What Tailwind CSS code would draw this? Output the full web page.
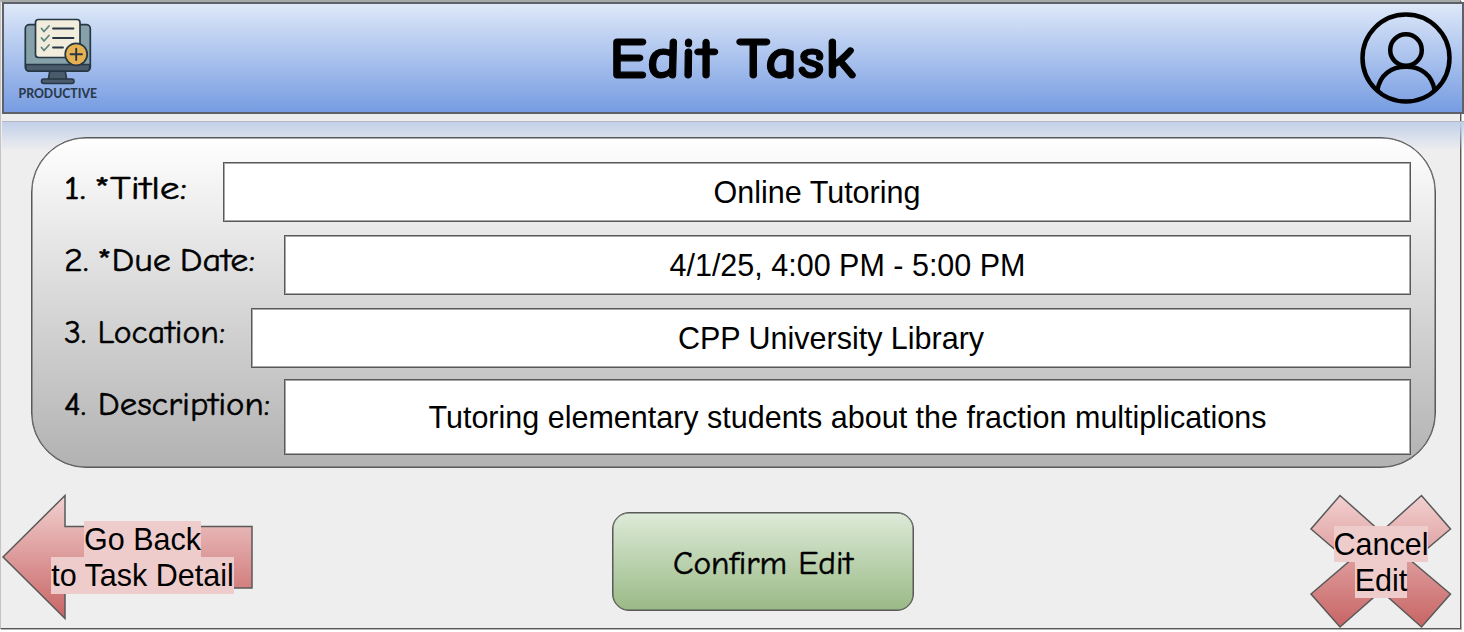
<!DOCTYPE html>
<html lang="en">
<head>
<meta charset="utf-8">
<title>Edit Task</title>
<script src="https://cdn.jsdelivr.net/npm/@tailwindcss/browser@4"></script>
</head>
<body class="w-[1464px] h-[632px] overflow-hidden bg-white text-black font-['Liberation_Sans',Arial,sans-serif]">
<div class="relative w-[1464px] h-[632px] flex flex-col">
  <!-- page frame -->
  <div class="absolute left-0 top-0 w-[1461px] h-[629px] bg-[#eeeeee] border-l border-l-[#c4c4c4] border-t-2 border-t-[#a5aaa8] border-r border-r-[#595959] border-b border-b-[#595959] shadow-[1px_1px_0_#b5b5b5]"></div>

  <header class="relative ml-[2px] mt-[2px] h-[112px] w-[1462px] shrink-0 border-2 border-[#5e6268] bg-linear-to-b from-[#dee8f8] to-[#779ce1] flex items-center justify-between pl-[12px] pr-[10px]">
    <svg class="w-[86px] h-[92px] overflow-visible" viewBox="16 12 86 92" fill="none" stroke-linecap="round" stroke-linejoin="round">
      <path d="M50 70h15l2 11H48z" fill="#4c5b6b" stroke="#263745" stroke-width="1.6"/>
      <rect x="41.500" y="79" width="32.500" height="4.600" rx="2" fill="#4c5b6b" stroke="#263745" stroke-width="1.500"/>
      <rect x="25.300" y="24.700" width="65" height="46.500" rx="4" fill="#86a1a9" stroke="#263745" stroke-width="1.700"/>
      <path d="M26 64.500h63.500v3q0 3.500-3.500 3.500H29.500q-3.500 0-3.500-3.500z" fill="#4c5b6b" stroke="#263745" stroke-width="1.300"/>
      <rect x="35.500" y="19.500" width="44.500" height="38" rx="3" fill="#f2ecdc" stroke="#263745" stroke-width="1.700"/>
      <path d="M41.500 28.500l2.500 3 5-5.500M41.500 38l2.500 3 5-5.500M41.500 47.500l2.500 3 5-5.500" stroke="#5b8580" stroke-width="1.800"/>
      <path d="M53 28.500h20.500M53 38h20.500M53 47.500h10" stroke="#263745" stroke-width="1.800"/>
      <circle cx="76.200" cy="54.300" r="11" fill="#e6b151" stroke="#263745" stroke-width="1.700"/>
      <path d="M70.500 54.300h11.500M76.200 48.600v11.500" stroke="#263745" stroke-width="1.900"/>
      <text x="18.500" y="98" textLength="78.500" lengthAdjust="spacingAndGlyphs" font-family="Lato, sans-serif" font-weight="900" font-size="13.300" fill="#2b3b50">PRODUCTIVE</text>
    </svg>
    <h1 class="absolute left-[605px] top-[18px]">
      <svg class="w-[260px] h-[76px]" viewBox="0 0 260 76"><text x="0" y="56" textLength="247" lengthAdjust="spacingAndGlyphs" font-family="'Comic Sans MS','Comic Neue',Lato,sans-serif" font-weight="900" font-size="59" word-spacing="-3" stroke="#000" stroke-width="1.100" stroke-linejoin="round">Edit Task</text></svg>
    </h1>
    <svg class="w-[92px] h-[92px]" viewBox="0 0 92 92" fill="none" stroke="#000" stroke-width="4.500">
      <circle cx="46" cy="46" r="43.500"/>
      <circle cx="46" cy="38" r="15.800"/>
      <path d="M17.500 78C20 63 31 54.800 46 54.800S72 63 74.500 78"/>
    </svg>
  </header>

  <!-- fading header reflection -->
  <div class="relative ml-[2px] mt-[7px] h-[30px] shrink-0 border-t border-[#b4b7bd] bg-linear-to-b from-[#c3d0ea] to-[#eeeeee]/0"></div>

  <main class="relative ml-[31px] -mt-[14px] w-[1405px] h-[331px] shrink-0 rounded-[55px] border border-[#595959] shadow-[inset_0_0_0_0.5px_#595959] bg-linear-to-b from-white to-[#b2b2b2] pl-[32px] pr-[24px] pt-[24px] text-[30.500px]">
    <div class="flex h-[60px] justify-between">
      <svg class="w-[150px] h-[52px]" viewBox="0 0 150 52"><text x="0" y="36.500" textLength="123" lengthAdjust="spacingAndGlyphs" font-family="'Comic Sans MS','Comic Neue',Lato,sans-serif" font-size="33" word-spacing="-4" stroke="#000" stroke-width="0.500">1. *Title:</text></svg>
      <div class="w-[1188px] h-[60px] bg-white border border-[#595959] shadow-[inset_0_0_0_1px_#a8a8a8] flex items-center justify-center pt-[2px]">Online Tutoring</div>
    </div>
    <div class="flex h-[60px] mt-[13px] justify-between">
      <svg class="w-[205px] h-[52px]" viewBox="0 0 205 52"><text x="0" y="35.500" textLength="191" lengthAdjust="spacingAndGlyphs" font-family="'Comic Sans MS','Comic Neue',Lato,sans-serif" font-size="33" word-spacing="-3" stroke="#000" stroke-width="0.500">2. *Due Date:</text></svg>
      <div class="w-[1127px] h-[60px] bg-white border border-[#595959] shadow-[inset_0_0_0_1px_#a8a8a8] flex items-center justify-center pt-[2px]">4/1/25, 4:00 PM - 5:00 PM</div>
    </div>
    <div class="flex h-[60px] mt-[13px] justify-between">
      <svg class="w-[175px] h-[52px]" viewBox="0 0 175 52"><text x="0" y="34.500" textLength="161" lengthAdjust="spacingAndGlyphs" font-family="'Comic Sans MS','Comic Neue',Lato,sans-serif" font-size="33" stroke="#000" stroke-width="0.500">3. Location:</text></svg>
      <div class="w-[1160px] h-[60px] bg-white border border-[#595959] shadow-[inset_0_0_0_1px_#a8a8a8] flex items-center justify-center pt-[2px]">CPP University Library</div>
    </div>
    <div class="flex h-[76px] mt-[11px] justify-between">
      <svg class="w-[215px] h-[52px]" viewBox="0 0 215 52"><text x="0" y="35.500" textLength="206" lengthAdjust="spacingAndGlyphs" font-family="'Comic Sans MS','Comic Neue',Lato,sans-serif" font-size="33" stroke="#000" stroke-width="0.500">4. Description:</text></svg>
      <div class="w-[1127px] h-[76px] bg-white border border-[#595959] shadow-[inset_0_0_0_1px_#a8a8a8] flex items-center justify-center pt-[2px]">Tutoring elementary students about the fraction multiplications</div>
    </div>
  </main>

  <footer class="relative h-[164px] w-[1464px] shrink-0 flex text-[30.500px] leading-[36px] text-center">
    <button class="relative w-[256px] h-[164px] shrink-0">
      <svg class="w-[256px] h-[164px]" viewBox="0 468 256 164">
        <defs><linearGradient id="red" x1="0" y1="0" x2="0" y2="1"><stop offset="0" stop-color="#f2d0d0"/><stop offset="1" stop-color="#c86464"/></linearGradient></defs>
        <path d="M3 557L65 495.500V526.500H252V588H65V618.500z" fill="url(#red)" stroke="#595959" stroke-width="1.500"/>
      </svg>
      <span class="absolute left-[51px] top-[53px] w-[183px] flex flex-col items-center whitespace-nowrap"><span class="bg-[#eecccc] h-[36px]">Go Back</span><span class="bg-[#eecccc] h-[37px]">to Task Detail</span></span>
    </button>
    <button class="mt-[44px] ml-[356px] w-[302px] h-[99px] shrink-0 rounded-[17px] border border-[#595959] shadow-[inset_0_0_0_0.5px_#595959] bg-linear-to-b from-[#ddead8] to-[#9aba86]">
      <svg class="w-[300px] h-[96px]" viewBox="0 0 300 96"><text x="60" y="59.500" textLength="180" lengthAdjust="spacingAndGlyphs" font-family="'Comic Sans MS','Comic Neue',Lato,sans-serif" font-size="33" stroke="#000" stroke-width="0.500">Confirm Edit</text></svg>
    </button>
    <button class="relative w-[156px] h-[164px] ml-auto shrink-0">
      <svg class="w-[156px] h-[164px]" viewBox="1308 468 156 164">
        <path d="M1340 495.500L1381 532L1421.500 495.500L1450.500 529L1412 561.500L1450.500 594L1421.500 627L1381 591L1340 627L1311 594L1349 561.500L1311 529z" fill="url(#red)" stroke="#595959" stroke-width="1.500"/>
      </svg>
      <span class="absolute left-[25px] top-[57.500px] w-[96px] flex flex-col items-center whitespace-nowrap"><span class="bg-[#eecccc] h-[36px]">Cancel</span><span class="bg-[#eecccc] h-[36px]">Edit</span></span>
    </button>
  </footer>
</div>
</body>
</html>
